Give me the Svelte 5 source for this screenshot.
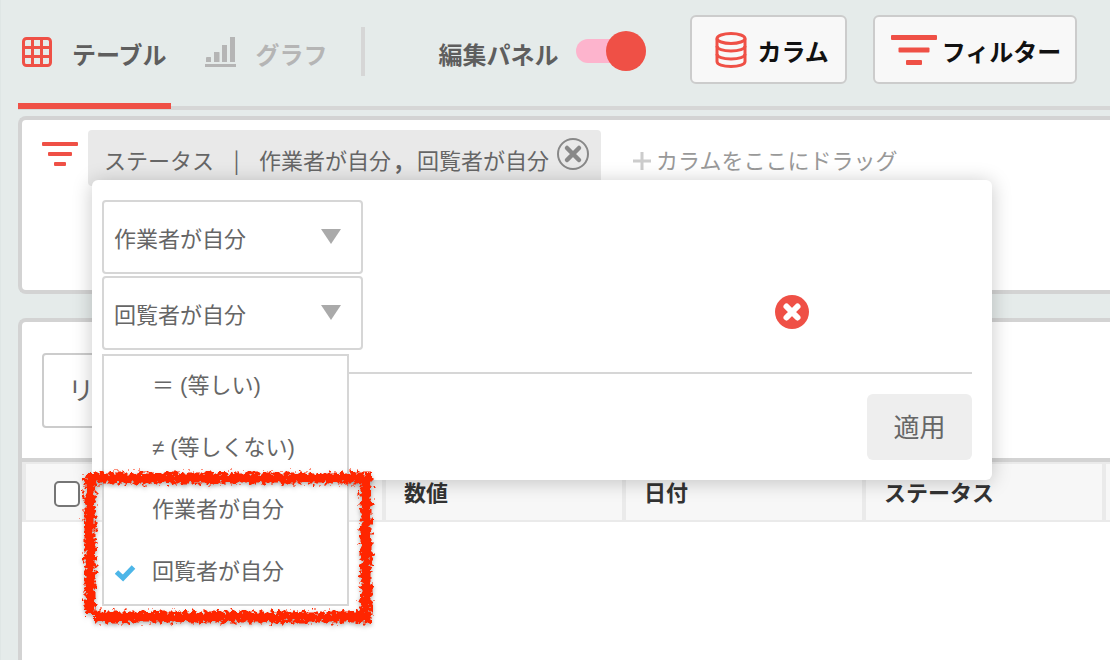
<script>
  let editPanel = true;
  let conditions = ["作業者が自分", "回覧者が自分"];
  let current = "回覧者が自分";

  const options = ["＝ (等しい)", "≠ (等しくない)", "作業者が自分", "回覧者が自分"];
  const columns = ["", "数値", "日付", "ステータス", ""];
</script>

<style>
  :global(body) {
    margin: 0;
    background: #e5ebea;
  }
  .page {
    box-sizing: border-box;
    display: flex;
    flex-direction: column;
    min-height: 100vh;
    padding-left: 17px;
    border-left: 1px solid #dfe6e5;
    overflow: hidden;
    font-family: "Noto Sans CJK JP", sans-serif;
    font-size: 22px;
    line-height: 32px;
    color: #666;
  }
  button,
  select {
    font: inherit;
    color: inherit;
    cursor: pointer;
  }
  button {
    padding: 0;
    border: none;
    background: none;
  }
  svg {
    display: block;
    flex: none;
  }

  header {
    box-sizing: border-box;
    display: flex;
    height: 110px;
    border-bottom: 4px solid #d6d6d6;
    font-size: 24px;
    font-weight: bold;
    color: #5e5e5e;
    white-space: nowrap;
  }
  nav {
    display: flex;
    height: 109px;
  }
  .tab {
    display: flex;
    align-items: center;
    gap: 20px;
    padding: 0 3px 0 4px;
    border-bottom: 6px solid transparent;
    margin-right: 30px;
    color: #b5b5b5;
  }
  .tab.active {
    padding-right: 4px;
    border-color: #ef5046;
    color: #5e5e5e;
  }
  .tab span {
    padding-top: 4px;
  }
  .divider {
    width: 4px;
    height: 49px;
    margin: 27px 74px 0 0;
    background: #d6d6d6;
  }
  .switch {
    display: flex;
    align-items: center;
    gap: 17px;
    height: 102px;
    margin-right: 44px;
  }
  .switch span {
    padding-top: 5px;
  }
  .switch input {
    appearance: none;
    position: relative;
    width: 70px;
    height: 24px;
    margin: 0;
    border-radius: 12px;
    background: #fdb4cd;
    cursor: pointer;
  }
  .switch input::after {
    content: "";
    position: absolute;
    top: -8px;
    left: 0;
    width: 40px;
    height: 40px;
    border-radius: 50%;
    background: #ef5046;
  }
  .switch input:checked::after {
    left: 30px;
  }
  .tool {
    box-sizing: border-box;
    display: flex;
    align-items: center;
    height: 69px;
    margin: 15px 26px 0 0;
    padding: 0 16px 0 23px;
    gap: 11px;
    border: 2px solid #ccc;
    border-radius: 6px;
    background: #f8f8f8;
    font-weight: bold;
    color: #111;
  }
  .tool.filter {
    padding: 0 14px 0 16px;
    gap: 5px;
  }
  .tool span {
    padding-top: 2px;
  }

  .panel {
    border: 4px solid #d3d3d3;
    border-right: none;
    background: #fff;
  }
  .filters {
    display: flex;
    align-items: flex-start;
    height: 170px;
    margin-top: 6px;
    border-radius: 8px 0 0 8px;
  }
  .filters > svg {
    margin: 22px 10px 0 20px;
  }
  .chip-wrap {
    position: relative;
    margin-top: 10px;
  }
  .chip {
    box-sizing: border-box;
    display: flex;
    align-items: center;
    height: 56px;
    padding: 2px 12px 0 16px;
    border-radius: 4px;
    background: #e9e9e9;
    white-space: nowrap;
  }
  .bar {
    width: 45px;
    text-align: center;
  }
  .comma {
    width: 26px;
    padding-left: 4px;
    box-sizing: border-box;
    font-weight: bold;
  }
  .chip button {
    margin: 0 0 10px 8px;
  }
  .drop {
    display: flex;
    align-items: center;
    gap: 5px;
    height: 62px;
    margin: 10px 0 0 32px;
    color: #999;
    white-space: nowrap;
  }
  .drop span {
    padding-bottom: 4px;
  }

  .popup {
    position: absolute;
    z-index: 2;
    top: 50px;
    left: 4px;
    box-sizing: border-box;
    width: 900px;
    padding: 20px 20px 20px 10px;
    border-radius: 6px;
    background: #fff;
    box-shadow: 0 2px 20px rgba(0, 0, 0, 0.22);
  }
  .condition {
    position: relative;
    display: flex;
    align-items: center;
    justify-content: space-between;
    margin-bottom: 2px;
  }
  .select {
    position: relative;
  }
  .select svg {
    position: absolute;
    top: 29px;
    right: 22px;
    pointer-events: none;
  }
  select {
    appearance: none;
    display: block;
    width: 261px;
    height: 74px;
    padding: 0 50px 0 10px;
    border: 2px solid #d6d6d6;
    border-radius: 4px;
    background: #fff;
  }
  .remove {
    margin: 0 163px 2px 0;
  }
  .actions {
    display: flex;
    justify-content: flex-end;
    margin-top: 22px;
    padding-top: 20px;
    border-top: 2px solid #d6d6d6;
  }
  .apply {
    width: 105px;
    height: 66px;
    padding-bottom: 2px;
    border-radius: 6px;
    background: #eee;
    font-size: 26px;
  }

  .menu {
    position: absolute;
    z-index: 3;
    top: 78px;
    left: 0;
    box-sizing: border-box;
    width: 247px;
    border: 2px solid #d6d6d6;
    background: #fff;
    font-family: "Liberation Sans", "Noto Sans CJK JP", sans-serif;
  }
  .menu ul {
    list-style: none;
    margin: 0;
    padding: 0;
  }
  .menu button {
    display: flex;
    align-items: center;
    width: 100%;
    height: 62px;
    padding: 0 0 2px 11px;
    white-space: nowrap;
  }
  .check {
    width: 37px;
    padding-top: 1px;
  }
  .marker {
    position: absolute;
    top: 108px;
    left: -30px;
    pointer-events: none;
  }

  .records {
    flex: 1;
    margin-top: 24px;
    border-bottom: none;
    border-radius: 8px 0 0 0;
  }
  .toolbar {
    padding: 31px 20px 30px;
    border-bottom: 4px solid #d3d3d3;
  }
  .view {
    display: block;
    width: 180px;
    height: 75px;
    padding: 0 0 4px 24px;
    border: 2px solid #ccc;
    border-radius: 4px;
    font-size: 26px;
    text-align: left;
  }
  .scroller {
    overflow: hidden;
  }
  table {
    table-layout: fixed;
    width: 1320px;
    border-spacing: 0;
  }
  th {
    box-sizing: border-box;
    width: 240px;
    height: 60px;
    padding: 0 18px 2px;
    border: solid #eaeaea;
    border-width: 2px 0 2px 4px;
    background: #f7f7f7;
    color: #333;
    text-align: left;
  }
  .tick {
    width: 120px;
    padding: 4px 28px 0;
  }
  .tick input {
    appearance: none;
    display: block;
    box-sizing: border-box;
    width: 26px;
    height: 26px;
    margin: 0;
    border: 2px solid #767676;
    border-radius: 5px;
    background: #fff;
  }
</style>

<div class="page">
  <header>
    <nav>
      <button class="tab active">
        <svg width="30" height="30" viewBox="0 0 30 30" fill="none" stroke="#ef5046" stroke-width="3">
          <rect x="1.5" y="1.5" width="27" height="27" rx="3" />
          <path d="M10.5 2v26M19.5 2v26M2 10.5h26M2 19.5h26" />
        </svg>
        <span>テーブル</span>
      </button>
      <button class="tab">
        <svg width="31" height="30" viewBox="0 0 31 30" fill="#b5b5b5">
          <path d="M0 27h31v3H0zM2 20h3.5q.5 0 .5.5V25H1v-4q0-1 1-1zM9 15h5q.5 0 .5.5V25H9zM17 8h5v17h-5zM25 0h5v25h-5z" />
        </svg>
        <span>グラフ</span>
      </button>
    </nav>
    <div class="divider"></div>
    <label class="switch">
      <span>編集パネル</span>
      <input type="checkbox" bind:checked={editPanel} />
    </label>
    <button class="tool">
      <svg width="32" height="36" viewBox="0 0 32 36" fill="none" stroke="#ef5046" stroke-width="3">
        <ellipse cx="16" cy="6.5" rx="14" ry="5" />
        <path d="M2 6.5v23c0 3 6 5 14 5s14-2 14-5v-23" />
        <path d="M2 14c0 3 6 5 14 5s14-2 14-5M2 22c0 3 6 5 14 5s14-2 14-5" />
      </svg>
      <span>カラム</span>
    </button>
    <button class="tool filter">
      <svg width="46" height="32" viewBox="0 0 46 32" fill="#ef5046">
        <rect y="1" width="46" height="5" rx="1" />
        <rect x="7.5" y="13.5" width="31" height="5" rx="1" />
        <rect x="15" y="26" width="16" height="5" rx="1" />
      </svg>
      <span>フィルター</span>
    </button>
  </header>

  <section class="panel filters">
    <svg width="36" height="24" viewBox="0 0 36 24" fill="#ef5046">
      <rect width="36" height="4" rx="1" />
      <rect x="6" y="10" width="24" height="4" rx="1" />
      <rect x="12" y="20" width="12" height="4" rx="1" />
    </svg>
    <div class="chip-wrap">
      <div class="chip">
        <span>ステータス</span>
        <span class="bar">|</span>
        <span>{conditions[0]}</span>
        <span class="comma">,</span>
        <span>{conditions[1]}</span>
        <button aria-label="フィルターを削除">
          <svg width="32" height="32" viewBox="0 0 32 32" fill="none" stroke="#888">
            <circle cx="16" cy="16" r="15" stroke-width="2" />
            <path d="M10 10l12 12M22 10l-12 12" stroke-width="4.5" stroke-linecap="round" />
          </svg>
        </button>
      </div>

      <div class="popup">
        {#each conditions as condition, i}
          <div class="condition">
            <div class="select">
              <select bind:value={conditions[i]} aria-label="条件">
                {#each options as option}
                  <option value={option}>{option}</option>
                {/each}
              </select>
              <svg width="20" height="16" viewBox="0 0 20 16" fill="#aaa">
                <path d="M0 0h20L10 15z" />
              </svg>
            </div>
            {#if i === 1}
              <button class="remove" aria-label="条件を削除">
                <svg width="34" height="34" viewBox="0 0 34 34">
                  <circle cx="17" cy="17" r="17" fill="#ef5046" />
                  <path d="M11.5 11.5l11 11M22.5 11.5l-11 11" stroke="#fff" stroke-width="6" stroke-linecap="round" />
                </svg>
              </button>
              <div class="menu">
                <ul>
                  {#each options as option}
                    <li>
                      <button on:click={() => (current = option)}>
                        <span class="check">
                          {#if option === current}
                            <svg width="22" height="18" viewBox="0 0 22 18" fill="none" stroke="#4db6e8" stroke-width="5" stroke-linejoin="miter">
                              <path d="M1.5 8l6.5 6L18.5 3" />
                            </svg>
                          {/if}
                        </span>
                        <span>{option}</span>
                      </button>
                    </li>
                  {/each}
                </ul>
                <svg class="marker" width="310" height="170" viewBox="0 0 310 170">
                  <defs>
                    <filter id="crayon" x="0" y="0" width="310" height="170" filterUnits="userSpaceOnUse" color-interpolation-filters="sRGB">
                      <feTurbulence type="fractalNoise" baseFrequency="0.28" numOctaves="2" seed="4" result="noise" />
                      <feDisplacementMap in="SourceGraphic" in2="noise" scale="12" xChannelSelector="R" yChannelSelector="G" result="rough" />
                      <feGaussianBlur in="rough" stdDeviation="0.5" result="soft" />
                      <feDropShadow in="soft" dx="0" dy="2" stdDeviation="2" flood-color="#000" flood-opacity="0.3" />
                    </filter>
                  </defs>
                  <path
                    d="M12 14H297M292 11V157M297 153H20M16 11V150"
                    fill="none"
                    stroke="#ff2600"
                    stroke-width="11"
                    filter="url(#crayon)" />
                </svg>
              </div>
            {/if}
          </div>
        {/each}
        <div class="actions">
          <button class="apply">適用</button>
        </div>
      </div>
    </div>
    <div class="drop">
      <svg width="18" height="18" viewBox="0 0 18 18" fill="#ccc">
        <path d="M7.5 0h3v7.5H18v3h-7.5V18h-3v-7.5H0v-3h7.5z" />
      </svg>
      <span>カラムをここにドラッグ</span>
    </div>
  </section>

  <section class="panel records">
    <div class="toolbar">
      <button class="view">リ</button>
    </div>
    <div class="scroller">
      <table>
        <thead>
          <tr>
            <th class="tick"><input type="checkbox" aria-label="すべて選択" /></th>
            {#each columns as column}
              <th>{column}</th>
            {/each}
          </tr>
        </thead>
      </table>
    </div>
  </section>
</div>
